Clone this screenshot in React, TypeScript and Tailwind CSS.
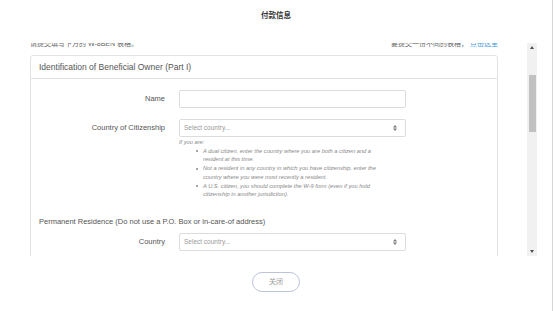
import React from 'react';

const FONT = '"Liberation Sans", Arial, "Noto Sans CJK SC", sans-serif';

function SelectArrows() {
  return (
    <svg width="4" height="6" viewBox="0 0 4 6" className="shrink-0">
      <path d="M2 0 L4 2.4 L0 2.4 Z" fill="#777" />
      <path d="M2 6 L4 3.6 L0 3.6 Z" fill="#777" />
    </svg>
  );
}

function SelectBox() {
  return (
    <div className="w-[227px] h-[18px] border border-[#dcdcdc] rounded-[2px] flex items-center justify-between pl-[4px] pr-[8px] bg-white">
      <span className="text-[6.5px] text-[#999]">Select country...</span>
      <SelectArrows />
    </div>
  );
}

function FormRow({ label, children }: { label: string; children: React.ReactNode }) {
  return (
    <div className="flex items-center">
      <div className="w-[126px] shrink-0 text-right text-[7.5px] text-[#555]">{label}</div>
      <div className="ml-[14px]">{children}</div>
    </div>
  );
}

function Scrollbar() {
  return (
    <div className="w-[10px] h-full bg-[#f1f1f1] flex flex-col items-center">
      <svg width="4" height="3" viewBox="0 0 4 3" className="mt-[3px]">
        <path d="M2 0 L4 3 L0 3 Z" fill="#505050" />
      </svg>
      <div className="mt-[26px] w-[7px] h-[57px] bg-[#c1c1c1]" />
      <div className="flex-1" />
      <svg width="4" height="3" viewBox="0 0 4 3" className="mb-[3px]">
        <path d="M0 0 L4 0 L2 3 Z" fill="#505050" />
      </svg>
    </div>
  );
}

const helpItems = [
  'A dual citizen, enter the country where you are both a citizen and a resident at this time.',
  'Not a resident in any country in which you have citizenship, enter the country where you were most recently a resident.',
  'A U.S. citizen, you should complete the W-9 form (even if you hold citizenship in another jurisdiction).',
];

export default function App() {
  return (
    <div
      className="w-[553px] h-[311px] bg-white border-r border-[#d6d6d6] flex flex-col overflow-hidden"
      style={{ fontFamily: FONT }}
    >
      {/* Title */}
      <div className="h-[43px] shrink-0 flex justify-center pt-[11px]">
        <span className="text-[7.5px] leading-[10px] font-bold text-[#333]">付款信息</span>
      </div>

      {/* Scroll area */}
      <div className="h-[213px] shrink-0 flex">
        <div className="flex-1 overflow-hidden pl-[30px] pr-[29px]">
          <div className="-mt-[4px] mb-[6px] flex justify-between text-[7px] leading-[10px] text-[#666]">
            <span>请提交填写下方的 W-8BEN 表格。</span>
            <span>
              要提交一份不同的表格， <span className="text-[#3d9be0]">点击这里</span>
            </span>
          </div>

          <div className="border border-[#e3e3e3] rounded-[3px]">
            <div className="h-[23px] border-b border-[#e3e3e3] flex items-center px-[8px]">
              <span className="text-[8.5px] text-[#555]">Identification of Beneficial Owner (Part I)</span>
            </div>

            <div className="px-[8px] pt-[11px] pb-[20px]">
              <FormRow label="Name">
                <div className="w-[227px] h-[18px] border border-[#dcdcdc] rounded-[2px] bg-white" />
              </FormRow>

              <div className="mt-[11px]">
                <FormRow label="Country of Citizenship">
                  <SelectBox />
                </FormRow>
              </div>

              <div className="ml-[140px] mt-[1px] text-[5.7px] leading-[8.7px] italic text-[#888]">
                <div>If you are:</div>
                <ul className="w-[206px]">
                  {helpItems.map((item) => (
                    <li key={item} className="flex">
                      <span className="w-[24px] shrink-0 flex justify-end pr-[5px] pt-[3.5px]">
                        <span className="w-[2px] h-[2px] bg-[#888] rounded-full" />
                      </span>
                      <span className="w-[182px]">{item}</span>
                    </li>
                  ))}
                </ul>
              </div>

              <div className="mt-[18px] text-[7.5px] leading-[10px] text-[#555]">
                Permanent Residence (Do not use a P.O. Box or in-care-of address)
              </div>

              <div className="mt-[6px]">
                <FormRow label="Country">
                  <SelectBox />
                </FormRow>
              </div>
            </div>
          </div>
        </div>
        <Scrollbar />
        <div className="w-[15px] shrink-0" />
      </div>

      {/* Footer */}
      <div className="flex-1 flex justify-center pt-[16px]">
        <button className="w-[48px] h-[20px] rounded-full border border-[#bcc4da] bg-white text-[7px] text-[#9a9a9a]">
          关闭
        </button>
      </div>
    </div>
  );
}
